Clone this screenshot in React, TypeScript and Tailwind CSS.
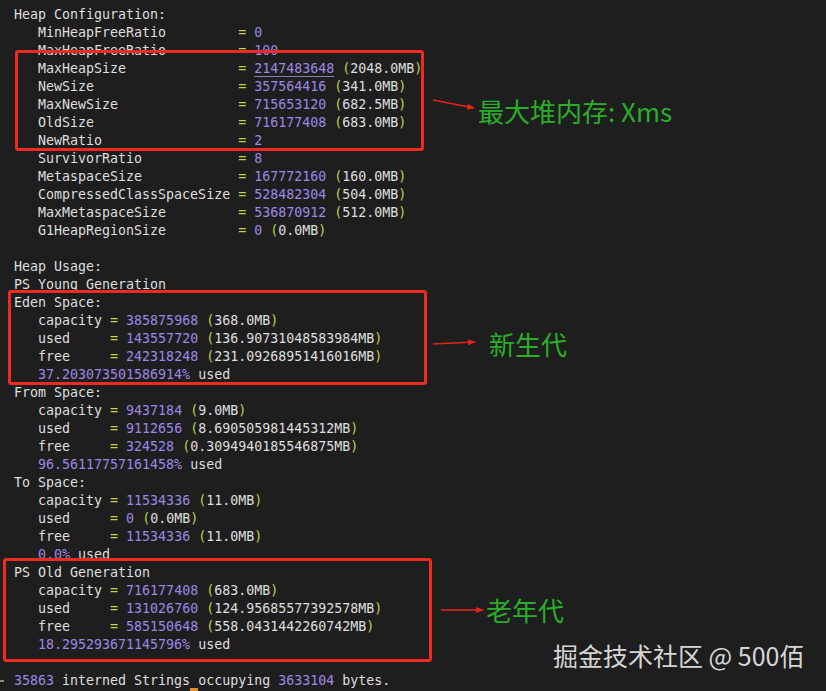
import React from "react";

type Seg = { t: string; c: "w" | "p" | "y" | "pu" };

const cls: Record<Seg["c"], string> = {
  w: "text-[#dedede]",
  p: "text-[#9d88e6]",
  y: "text-[#c3d24a]",
  pu: "text-[#9d88e6] underline decoration-[#8a80b0] underline-offset-[3px]",
};

const cfg = (name: string, num: string, mb?: string, link = false): Seg[] => {
  const s: Seg[] = [
    { t: "   " + name.padEnd(25), c: "w" },
    { t: "= ", c: "y" },
    { t: num, c: link ? "pu" : "p" },
  ];
  if (mb) {
    s.push({ t: " ", c: "w" }, { t: "(", c: "y" }, { t: mb, c: "w" }, { t: ")", c: "y" });
  }
  return s;
};

const use = (name: string, num: string, mb: string): Seg[] => [
  { t: "   " + name.padEnd(9), c: "w" },
  { t: "= ", c: "y" },
  { t: num, c: "p" },
  { t: " ", c: "w" },
  { t: "(", c: "y" },
  { t: mb, c: "w" },
  { t: ")", c: "y" },
];

const pct = (p: string): Seg[] => [
  { t: "   " + p, c: "p" },
  { t: " used", c: "w" },
];

const txt = (t: string): Seg[] => [{ t, c: "w" }];

const lines: Seg[][] = [
  txt("Heap Configuration:"),
  cfg("MinHeapFreeRatio", "0"),
  cfg("MaxHeapFreeRatio", "100"),
  cfg("MaxHeapSize", "2147483648", "2048.0MB", true),
  cfg("NewSize", "357564416", "341.0MB"),
  cfg("MaxNewSize", "715653120", "682.5MB"),
  cfg("OldSize", "716177408", "683.0MB"),
  cfg("NewRatio", "2"),
  cfg("SurvivorRatio", "8"),
  cfg("MetaspaceSize", "167772160", "160.0MB"),
  cfg("CompressedClassSpaceSize", "528482304", "504.0MB"),
  cfg("MaxMetaspaceSize", "536870912", "512.0MB"),
  cfg("G1HeapRegionSize", "0", "0.0MB"),
  txt(""),
  txt("Heap Usage:"),
  txt("PS Young Generation"),
  txt("Eden Space:"),
  use("capacity", "385875968", "368.0MB"),
  use("used", "143557720", "136.90731048583984MB"),
  use("free", "242318248", "231.09268951416016MB"),
  pct("37.203073501586914%"),
  txt("From Space:"),
  use("capacity", "9437184", "9.0MB"),
  use("used", "9112656", "8.690505981445312MB"),
  use("free", "324528", "0.3094940185546875MB"),
  pct("96.56117757161458%"),
  txt("To Space:"),
  use("capacity", "11534336", "11.0MB"),
  use("used", "0", "0.0MB"),
  use("free", "11534336", "11.0MB"),
  pct("0.0%"),
  txt("PS Old Generation"),
  use("capacity", "716177408", "683.0MB"),
  use("used", "131026760", "124.95685577392578MB"),
  use("free", "585150648", "558.0431442260742MB"),
  pct("18.295293671145796%"),
  txt(""),
  [
    { t: "35863", c: "p" },
    { t: " interned Strings occupying ", c: "w" },
    { t: "3633104", c: "p" },
    { t: " bytes.", c: "w" },
  ],
];

const mono = { fontFamily: '"DejaVu Sans Mono", "Liberation Mono", monospace' };
const cjk = { fontFamily: '"Noto Sans CJK SC", "Noto Sans", sans-serif' };

export default function App() {
  return (
    <div className="relative w-[826px] h-[691px] bg-[#1e1e1e] overflow-hidden">
      <div
        className="flex flex-col pt-[6px] pl-[14px] text-[13.3px] whitespace-pre"
        style={mono}
      >
        {lines.map((l, i) => (
          <div key={i} className="h-[18px] leading-[18px]">
            {l.map((s, j) => (
              <span key={j} className={cls[s.c]}>
                {s.t}
              </span>
            ))}
          </div>
        ))}
      </div>

      {/* left gutter marker and cursor */}
      <div className="absolute left-0 top-[680px] w-[4px] h-[2px] bg-[#8a8a8a]" />
      <div className="absolute left-[190px] top-[688px] w-[8px] h-[3px] bg-[#e0902a]" />

      {/* red annotation boxes */}
      <div className="absolute left-[15px] top-[50px] w-[409px] h-[101px] border-[3px] border-[#ee2a22] rounded-[3px]" />
      <div className="absolute left-[8px] top-[290px] w-[419px] h-[95px] border-[3px] border-[#ee2a22] rounded-[3px]" />
      <div className="absolute left-[3px] top-[558px] w-[429px] h-[104px] border-[3px] border-[#ee2a22] rounded-[3px]" />

      {/* arrows */}
      <svg className="absolute left-0 top-0" width="826" height="691">
        <defs>
          <marker id="ah" markerWidth="8" markerHeight="8" refX="7" refY="4" orient="auto" markerUnits="userSpaceOnUse">
            <path d="M0,1 L8,4 L0,7 Z" fill="#e8231c" />
          </marker>
        </defs>
        <line x1="433" y1="100" x2="474" y2="108" stroke="#e8231c" strokeWidth="1.6" markerEnd="url(#ah)" />
        <line x1="433" y1="344" x2="475" y2="342" stroke="#e8231c" strokeWidth="1.6" markerEnd="url(#ah)" />
        <line x1="441" y1="610" x2="483" y2="610" stroke="#e8231c" strokeWidth="1.6" markerEnd="url(#ah)" />
      </svg>

      {/* annotation labels */}
      <div className="absolute left-[478px] top-[94px] text-[26px] leading-[34px] text-[#2aae2a]" style={cjk}>
        最大堆内存: Xms
      </div>
      <div className="absolute left-[489px] top-[327px] text-[26px] leading-[34px] text-[#2aae2a]" style={cjk}>
        新生代
      </div>
      <div className="absolute left-[486px] top-[593px] text-[26px] leading-[34px] text-[#2aae2a]" style={cjk}>
        老年代
      </div>
      <div className="absolute left-[553px] top-[638px] text-[25px] leading-[34px] text-[#d6d6d6]" style={cjk}>
        掘金技术社区 @ 500佰
      </div>
    </div>
  );
}
